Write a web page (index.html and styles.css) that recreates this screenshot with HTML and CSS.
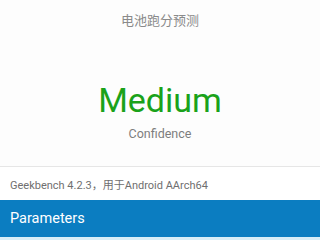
FILE: index.html
```html
<!DOCTYPE html>
<html>
<head>
<meta charset="utf-8">
<link rel="stylesheet" href="styles.css">
</head>
<body>
<div class="page">
  <div class="hero">
    <div class="title">电池跑分预测</div>
    <div class="level">Medium</div>
    <div class="label">Confidence</div>
  </div>
  <div class="info">Geekbench 4.2.3，用于Android AArch64</div>
  <div class="section">Parameters</div>
</div>
</body>
</html>
```

FILE: styles.css
```css
html, body {
  margin: 0;
  padding: 0;
  background: #fdfdfd;
}
.page {
  width: 320px;
  height: 240px;
  overflow: hidden;
  font-family: Roboto, "Noto Sans CJK SC", sans-serif;
  display: flex;
  flex-direction: column;
}
.hero {
  height: 167px;
  flex: none;
  display: flex;
  flex-direction: column;
  align-items: center;
  border-bottom: 1px solid #e6e6e6;
  box-sizing: border-box;
}
.title {
  margin-top: 12px;
  font-size: 13px;
  line-height: 18px;
  color: #8a8a8a;
}
.level {
  margin-top: 50px;
  font-size: 34px;
  line-height: 40px;
  color: #1aa21a;
}
.label {
  margin-top: 6px;
  font-size: 12.5px;
  line-height: 16px;
  color: #7d7d7d;
}
.info {
  height: 33px;
  flex: none;
  display: flex;
  align-items: center;
  padding-left: 10px;
  font-size: 11px;
  color: #6f6f6f;
  background: #ffffff;
}
.section {
  height: 37px;
  flex: none;
  display: flex;
  align-items: center;
  padding-left: 10px;
  font-size: 14.5px;
  color: #ffffff;
  background: #0b7dc1;
  border-bottom: 3px solid #d8eef8;
}
```
